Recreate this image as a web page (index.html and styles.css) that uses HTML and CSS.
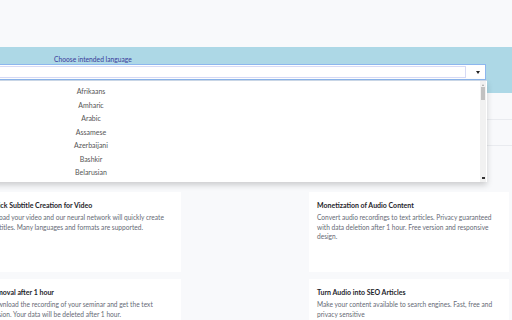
FILE: index.html
```html
<!DOCTYPE html>
<html>
<head>
<meta charset="utf-8">
<link rel="stylesheet" href="styles.css">
</head>
<body>
<div class="page">
  <div class="top"></div>
  <div class="band">
    <div class="label">Choose intended language</div>
    <div class="select">
      <div class="field"></div>
      <div class="arrow"></div>
      <div class="dropdown">
        <ul class="options">
          <li>Afrikaans</li>
          <li>Amharic</li>
          <li>Arabic</li>
          <li>Assamese</li>
          <li>Azerbaijani</li>
          <li>Bashkir</li>
          <li>Belarusian</li>
        </ul>
        <div class="scrollbar">
          <div class="sb-up"></div>
          <div class="sb-thumb"></div>
          <div class="sb-down"></div>
        </div>
      </div>
    </div>
  </div>
  <div class="rows">
    <div class="row r1"></div>
    <div class="row r2"></div>
    <div class="row r3"></div>
  </div>
  <div class="cards">
    <div class="card">
      <div class="card-title">Quick Subtitle Creation for Video</div>
      <p class="card-text">Upload your video and our neural network will quickly create subtitles. Many languages and formats are supported.</p>
    </div>
    <div class="card">
      <div class="card-title">Monetization of Audio Content</div>
      <p class="card-text">Convert audio recordings to text articles. Privacy guaranteed with data deletion after 1 hour. Free version and responsive design.</p>
    </div>
    <div class="card">
      <div class="card-title">Removal after 1 hour</div>
      <p class="card-text">Download the recording of your seminar and get the text version. Your data will be deleted after 1 hour.</p>
    </div>
    <div class="card">
      <div class="card-title">Turn Audio into SEO Articles</div>
      <p class="card-text">Make your content available to search engines. Fast, free and privacy sensitive</p>
    </div>
  </div>
</div>
</body>
</html>
```

FILE: styles.css
```css
* { box-sizing: border-box; }
html, body {
  margin: 0;
  padding: 0;
  width: 512px;
  height: 320px;
  overflow: hidden;
  background: #f8f9fb;
  font-family: Lato, "Open Sans", sans-serif;
}
.page {
  width: 512px;
  height: 320px;
  overflow: hidden;
}
.top {
  height: 47px;
}
.band {
  height: 46px;
  background: #add8e6;
  padding-top: 8px;
  position: relative;
}
.label {
  margin-left: 54px;
  font-size: 6.7px;
  line-height: 9px;
  color: #3a3a9a;
}
.select {
  position: relative;
  margin-left: -10px;
  width: 496px;
  height: 16px;
  border: 1px solid #8db7ee;
  background: #fff;
  padding: 1px 19px 1px 0;
}
.field {
  height: 12px;
  border: 1px solid #d6daf6;
  background: #fff;
}
.arrow {
  position: absolute;
  right: 5px;
  top: 6px;
  width: 0;
  height: 0;
  border-left: 2.5px solid transparent;
  border-right: 2.5px solid transparent;
  border-top: 3px solid #222;
}
.dropdown {
  position: absolute;
  left: -1px;
  top: 15px;
  width: 497px;
  height: 102px;
  background: #fff;
  border-top: 1px solid #c9d6e6;
  box-shadow: 0 3px 6px rgba(0, 0, 0, 0.18);
  z-index: 5;
}
.options {
  list-style: none;
  margin: 0;
  padding: 4px 0 0 0;
  width: 202px;
}
.options li {
  height: 13.5px;
  line-height: 13.5px;
  font-size: 7px;
  color: #555;
  text-align: center;
}
.scrollbar {
  position: absolute;
  right: 1px;
  top: 0;
  width: 6px;
  height: 100%;
  background: #f1f1f1;
}
.sb-up {
  position: absolute;
  top: 3px;
  left: 1.5px;
  width: 0;
  height: 0;
  border-left: 1.5px solid transparent;
  border-right: 1.5px solid transparent;
  border-bottom: 2px solid #a3a3a3;
}
.sb-thumb {
  position: absolute;
  top: 6px;
  left: 1px;
  width: 4px;
  height: 13px;
  background: #c1c1c1;
}
.sb-down {
  position: absolute;
  bottom: 3px;
  left: 1.5px;
  width: 3px;
  height: 2px;
  background: #333;
}
.rows {
  height: 99px;
}
.row {
  border-bottom: 1px solid #e9ebef;
}
.r1 { height: 27px; }
.r2 { height: 26px; }
.r3 { height: 45px; border-bottom: none; }
.cards {
  display: grid;
  grid-template-columns: 200px 200px;
  column-gap: 128px;
  row-gap: 7px;
  margin-left: -19px;
}
.card {
  background: #fff;
  height: 80px;
  padding: 8px;
}
.card-title {
  font-size: 7px;
  line-height: 10px;
  font-weight: 700;
  color: #1e1e2a;
  margin-bottom: 3px;
}
.card-text {
  margin: 0;
  font-size: 6.6px;
  line-height: 9.6px;
  color: #666a75;
}
```
